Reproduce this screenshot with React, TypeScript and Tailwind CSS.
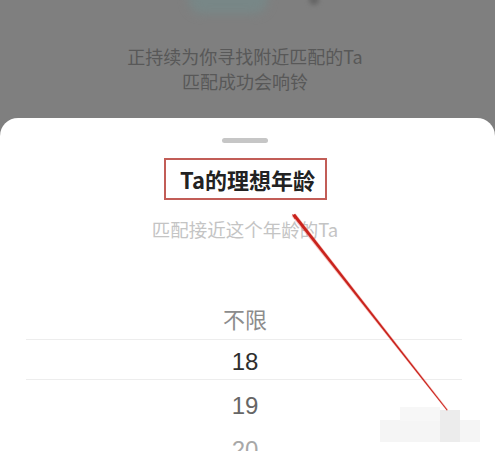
import React from "react";

const font = { fontFamily: '"Noto Sans CJK SC", "Noto Sans", sans-serif' };
const digits = { fontFamily: '"Liberation Sans", "Noto Sans", sans-serif' };

export default function App() {
  return (
    <div
      className="relative w-[495px] h-[451px] overflow-hidden bg-[#7f7f7f] flex flex-col"
      style={font}
    >
      {/* blurred picture peeking at top */}
      <div className="absolute left-[188px] top-[-16px] w-[80px] h-[30px] rounded-full bg-[#788787] blur-[5px]" />
      <div className="absolute left-[309px] top-[-6px] w-[10px] h-[11px] rounded-full bg-[#666666] blur-[2px]" />

      {/* background text */}
      <div className="h-[118px] shrink-0 flex flex-col items-center pt-[44px] pr-[5px] text-[18px] leading-[25px] text-[#585858]">
        <div>正持续为你寻找附近匹配的Ta</div>
        <div>匹配成功会响铃</div>
      </div>

      {/* bottom sheet */}
      <div className="flex-1 bg-white rounded-t-[18px] flex flex-col items-center pr-[5px]">
        <div className="mt-[20px] w-[46px] h-[5px] rounded-full bg-[#c6c6c6]" />
        <div className="mt-[15px] h-[42px] w-[163px] border-2 border-[#c25d57] flex items-center justify-center pl-[5px] text-[22px] font-bold text-[#222222]">
          Ta的理想年龄
        </div>
        <div className="mt-[18px] text-[18.5px] leading-[22px] text-[#c4c4c4]">
          匹配接近这个年龄的Ta
        </div>

        <div className="relative mt-[56px] w-full flex flex-col items-center">
          <div className="h-[44px] flex items-center text-[22px] text-[#8c8c8c]">不限</div>
          <div className="h-[44px] flex items-center text-[24px] text-[#2e2e2e]" style={digits}>18</div>
          <div className="h-[44px] flex items-center text-[24px] text-[#666666]" style={digits}>19</div>
          <div className="h-[44px] flex items-center text-[24px] text-[#a8a8a8]" style={digits}>20</div>
          {/* selection band lines */}
          <div className="absolute left-[26px] w-[436px] top-[43px] h-[1px] bg-[#ededed]" />
          <div className="absolute left-[26px] w-[436px] top-[83px] h-[1px] bg-[#ededed]" />
        </div>
      </div>

      {/* watermark blocks */}
      <div className="absolute left-[380px] top-[420px] w-[100px] h-[22px] bg-[#f5f5f5]" />
      <div className="absolute left-[400px] top-[407px] w-[40px] h-[14px] bg-[#f7f7f7]" />
      <div className="absolute left-[440px] top-[410px] w-[20px] h-[32px] bg-[#ececec]" />

      {/* red annotation arrow */}
      <svg className="absolute inset-0 pointer-events-none" width="495" height="451" viewBox="0 0 495 451">
        <polygon points="291.5,216 295.5,213.5 448,409.5 446.5,410.5" fill="#e84a40" opacity="0.35" />
        <polygon points="292.5,215.5 295,213.8 447.6,410 446.9,410.4" fill="#c9231d" />
        <polygon points="292,214 297,216.5 294.5,219" fill="#c9231d" />
      </svg>
    </div>
  );
}
